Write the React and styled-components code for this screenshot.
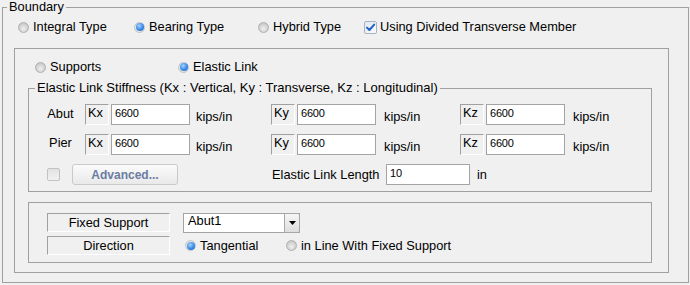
import React from "react";
import styled, { createGlobalStyle } from "styled-components";

const GlobalStyle = createGlobalStyle`
  html, body { margin: 0; padding: 0; background: #f0f0f0; }
  body {
    font-family: "Liberation Sans", Arial, sans-serif;
    font-size: 12.8px;
    color: #000;
  }
  * { box-sizing: border-box; }
`;

const Frame = styled.fieldset`
  margin: 0;
  padding: 0;
  min-width: 0;
  border: 1px solid #a0a0a0;
`;

const Outer = styled(Frame)`
  margin-left: 2px;
  width: 687px;
  height: 283px;
`;

const Stiff = styled(Frame)`
  margin-top: 7px;
  height: 111px;
  padding-top: 9px;
`;

const Legend = styled.legend`
  padding: 0 2px;
  margin-left: ${(p) => p.$indent}px;
  line-height: 14px;
  font-size: ${(p) => p.$size || 12.8}px;
`;

const TypeRow = styled.div`
  display: grid;
  grid-template-columns: 116px 124px 106px auto;
  padding: 6px 0 0 15px;
`;

const Option = styled.label`
  display: inline-flex;
  align-items: center;
  gap: ${(p) => p.$gap || 4}px;
  height: 14px;
  line-height: 14px;
  white-space: nowrap;
  width: ${(p) => (p.$w ? `${p.$w}px` : "auto")};
  flex: none;
`;

const RadioDot = styled.span`
  width: 11px;
  height: 11px;
  flex: none;
  border-radius: 50%;
  border: 1px solid ${(p) => (p.$on ? "#c4c4c4" : "#b0b0b0")};
  background: ${(p) =>
    p.$on
      ? "#e4e4e4"
      : "radial-gradient(circle at 50% 62%, #f0f0f0 0, #d2d2d2 55%, #c0c0c0 100%)"};
  display: grid;
  place-items: center;
  &::after {
    content: "";
    display: ${(p) => (p.$on ? "block" : "none")};
    width: 8px;
    height: 8px;
    border-radius: 50%;
    background: radial-gradient(circle at 40% 35%, #a6d4ff 0, #3a8ae6 55%, #1a5ec2 100%);
  }
`;

const Radio = ({ on, children, w }) => (
  <Option $w={w}>
    <RadioDot $on={on} />
    {children}
  </Option>
);

const CheckedBox = () => (
  <svg width="13" height="13" viewBox="0 0 13 13">
    <defs>
      <linearGradient id="cbg" x1="0" y1="0" x2="1" y2="1">
        <stop offset="0" stopColor="#dfe6ee" />
        <stop offset="1" stopColor="#fbfcfd" />
      </linearGradient>
    </defs>
    <rect x="0.5" y="0.5" width="12" height="12" rx="1.5" fill="url(#cbg)" stroke="#a9b3bf" />
    <path d="M3 6.6 L5.4 9 L10.2 3.6" fill="none" stroke="#1f62c8" strokeWidth="2" strokeLinecap="round" strokeLinejoin="round" />
  </svg>
);

const EmptyBox = styled.span`
  width: 13px;
  height: 13px;
  flex: none;
  border: 1px solid #c2c2c2;
  border-radius: 2px;
  background: linear-gradient(#e2e2e2, #f2f2f2);
`;

const Inner = styled.div`
  margin: 14px 0 0 11px;
  width: 655px;
  border: 1px solid #a0a0a0;
  padding: 11px 16px 9px 13px;
`;

const SupportRow = styled.div`
  display: grid;
  grid-template-columns: 143px auto;
  padding-left: 7px;
  height: 14px;
`;

const StiffBody = styled.div`
  display: flex;
  flex-direction: column;
  gap: 9px;
`;

const KRow = styled.div`
  display: flex;
  align-items: center;
  height: 21px;
  padding-left: 7px;
`;

const RowName = styled.span`
  width: 49px;
  flex: none;
  text-align: center;
  line-height: 14px;
  margin-top: ${(p) => p.$dy || 0}px;
`;

const KGroup = styled.div`
  display: flex;
  align-items: center;
  width: ${(p) => p.$w}px;
  height: 21px;
  flex: none;
`;

const KTag = styled.span`
  width: 24px;
  height: 21px;
  flex: none;
  border-top: 1px solid #a0a0a0;
  border-left: 1px solid #a0a0a0;
  border-right: 1px solid #fff;
  border-bottom: 1px solid #fff;
  padding-left: 2px;
  line-height: 16px;
`;

const Field = styled.input`
  width: ${(p) => p.$w}px;
  height: 21px;
  margin: 0 0 0 ${(p) => p.$ml || 0}px;
  flex: none;
  border: 1px solid #a4a4a4;
  background: #fff;
  font-family: "Liberation Sans", Arial, sans-serif;
  font-size: 11px;
  letter-spacing: -0.2px;
  color: #000;
  padding: 0 3px 3px;
  outline: none;
`;

const Unit = styled.span`
  margin-left: ${(p) => p.$ml}px;
  align-self: ${(p) => (p.$low ? "flex-start" : "center")};
  margin-top: ${(p) => (p.$low ? 6 : 0)}px;
  line-height: 14px;
  white-space: nowrap;
`;

const AdvRow = styled.div`
  display: flex;
  align-items: center;
  height: 21px;
  padding-left: 18px;
`;

const AdvButton = styled.button`
  margin-left: 12px;
  width: 106px;
  height: 21px;
  flex: none;
  padding: 0;
  border: 1px solid #cacaca;
  border-radius: 3px;
  background: linear-gradient(#fbfbfb, #e9e9e9);
  font-family: "Liberation Sans", Arial, sans-serif;
  font-weight: bold;
  font-size: 12px;
  color: #6b7ca3;
`;

const LengthLabel = styled.span`
  margin-left: 94px;
  width: 114px;
  flex: none;
  line-height: 14px;
  white-space: nowrap;
`;

const BottomBox = styled.div`
  margin-top: 10px;
  height: 61px;
  border: 1px solid #a0a0a0;
  padding: 10px 0 0 18px;
  display: flex;
  flex-direction: column;
  gap: 4px;
`;

const SettingRow = styled.div`
  display: flex;
  align-items: center;
  height: 19px;
`;

const FieldTag = styled.span`
  width: 123px;
  height: 19px;
  flex: none;
  border-top: 1px solid #a0a0a0;
  border-left: 1px solid #a0a0a0;
  border-right: 1px solid #fff;
  border-bottom: 1px solid #fff;
  text-align: center;
  line-height: 17px;
`;

const Select = styled.div`
  margin-left: 13px;
  width: 117px;
  height: 20px;
  display: flex;
  border: 1px solid #a4a4a4;
  background: #fff;
`;

const SelectValue = styled.span`
  flex: 1;
  padding-left: 4px;
  line-height: 14px;
`;

const DropBtn = styled.span`
  width: 16px;
  flex: none;
  border: 1px solid #a8a8a8;
  border-radius: 0 2px 2px 0;
  margin: -1px -1px -1px 0;
  background: linear-gradient(#f6f6f6, #dedede);
  display: grid;
  place-items: center;
`;

const Spacer = styled.span`
  width: ${(p) => p.$w}px;
  flex: none;
`;

const kRows = [
  { name: "Abut", dy: -1 },
  { name: "Pier", dy: -3 },
];

const groups = [
  { tag: "Kx", w: 186 },
  { tag: "Ky", w: 189 },
  { tag: "Kz", w: 190 },
];

export default function App() {
  return (
    <>
      <GlobalStyle />
      <Outer>
        <Legend $indent={4}>Boundary</Legend>
        <TypeRow>
          <Radio>Integral Type</Radio>
          <Radio on>Bearing Type</Radio>
          <Radio>Hybrid Type</Radio>
          <Option $gap={3}>
            <CheckedBox />
            Using Divided Transverse Member
          </Option>
        </TypeRow>
        <Inner>
          <SupportRow>
            <Radio>Supports</Radio>
            <Radio on>Elastic Link</Radio>
          </SupportRow>
          <Stiff>
            <Legend $indent={6} $size={13}>
              Elastic Link Stiffness (Kx : Vertical, Ky : Transverse, Kz : Longitudinal)
            </Legend>
            <StiffBody>
              {kRows.map((r) => (
                <KRow key={r.name}>
                  <RowName $dy={r.dy}>{r.name}</RowName>
                  {groups.map((g) => (
                    <KGroup key={g.tag} $w={g.w}>
                      <KTag>{g.tag}</KTag>
                      <Field $w={79} $ml={2} readOnly value="6600" />
                      <Unit $ml={g.tag === "Kx" ? 6 : 8} $low>
                        kips/in
                      </Unit>
                    </KGroup>
                  ))}
                </KRow>
              ))}
              <AdvRow>
                <EmptyBox />
                <AdvButton disabled>Advanced...</AdvButton>
                <LengthLabel>Elastic Link Length</LengthLabel>
                <Field $w={84} readOnly value="10" />
                <Unit $ml={7}>in</Unit>
              </AdvRow>
            </StiffBody>
          </Stiff>
          <BottomBox>
            <SettingRow>
              <FieldTag>Fixed Support</FieldTag>
              <Select>
                <SelectValue>Abut1</SelectValue>
                <DropBtn>
                  <svg width="7" height="4" viewBox="0 0 7 4">
                    <polygon points="0,0 7,0 3.5,4" fill="#000" />
                  </svg>
                </DropBtn>
              </Select>
            </SettingRow>
            <SettingRow>
              <FieldTag>Direction</FieldTag>
              <Spacer $w={15} />
              <Radio on w={101}>
                Tangential
              </Radio>
              <Radio>in Line With Fixed Support</Radio>
            </SettingRow>
          </BottomBox>
        </Inner>
      </Outer>
    </>
  );
}
